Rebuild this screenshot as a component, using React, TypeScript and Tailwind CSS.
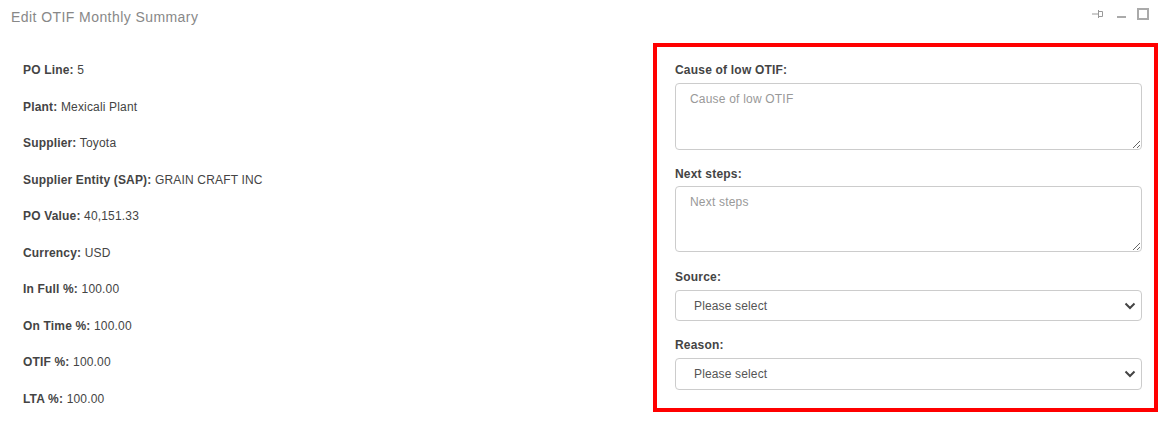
const details = [
  { label: "PO Line:", value: "5" },
  { label: "Plant:", value: "Mexicali Plant" },
  { label: "Supplier:", value: "Toyota" },
  { label: "Supplier Entity (SAP):", value: "GRAIN CRAFT INC" },
  { label: "PO Value:", value: "40,151.33" },
  { label: "Currency:", value: "USD" },
  { label: "In Full %:", value: "100.00" },
  { label: "On Time %:", value: "100.00" },
  { label: "OTIF %:", value: "100.00" },
  { label: "LTA %:", value: "100.00" },
];

function Field({ label, placeholder, height, className, gap }: { label: string; placeholder: string; height: string; className?: string; gap: string }) {
  return (
    <div className={className}>
      <label className="block h-[16px] text-[12px] leading-[16px] font-bold tracking-[0.2px] text-[#444]">{label}</label>
      <textarea
        placeholder={placeholder}
        className={`${gap} block w-full ${height} rounded-[4px] border border-[#ccc] px-[14px] py-[6px] text-[12px] leading-[18px] tracking-[0.2px] text-[#555] outline-none placeholder:text-[#999]`}
      />
    </div>
  );
}

function SelectField({ label, height, className }: { label: string; height: string; className?: string }) {
  return (
    <div className={className}>
      <label className="block h-[16px] text-[12px] leading-[16px] font-bold tracking-[0.2px] text-[#444]">{label}</label>
      <div className={`relative mt-[5px] flex ${height} w-full items-center rounded-[4px] border border-[#ccc] pl-[18px] text-[12px] tracking-[0.15px] text-[#555]`}>
        Please select
        <svg viewBox="0 0 12 8" className="absolute right-[5px] top-1/2 h-[8px] w-[12px] -translate-y-1/2" fill="none" stroke="#444" strokeWidth="2">
          <path d="M1.500 1.500 6 6l4.500-4.500" />
        </svg>
      </div>
    </div>
  );
}

export default function App() {
  return (
    <div className="h-[431px] w-[1160px] overflow-hidden bg-white font-['Liberation_Sans',Arial,sans-serif]">
      <div className="flex h-[43px] items-start justify-between pl-[11px] pr-[11px] pt-[8px]">
        <h1 className="text-[14px] leading-[18px] tracking-[0.43px] text-[#888]">Edit OTIF Monthly Summary</h1>
        <div className="flex items-center">
          <svg viewBox="0 0 12 8" className="h-[8px] w-[12px]" fill="none" stroke="#999" strokeWidth="1">
            <path d="M0 4h6M6.500 0v8M6.500 1.500h4v5h-4" />
          </svg>
          <span className="ml-[13px] mt-[6px] h-[2px] w-[9px] bg-[#aaa]" />
          <span className="ml-[11px] h-[12px] w-[12px] border-2 border-[#aaa]" />
        </div>
      </div>
      <div className="flex items-start">
        <div className="w-[653px] pl-[23px] pt-[19px]">
          {details.map((row) => (
            <p key={row.label} className="mb-[20.500px] h-[16px] text-[12px] leading-[16px] tracking-[0.17px] text-[#444]">
              <span className="font-bold">{row.label}</span> {row.value}
            </p>
          ))}
        </div>
        <div className="flex h-[369px] w-[505px] flex-col border-4 border-[#ff0000] pl-[18px] pr-[12px] pt-[15px]">
          <Field gap="mt-[5px]" label="Cause of low OTIF:" placeholder="Cause of low OTIF" height="h-[67px]" />
          <Field gap="mt-[4px]" className="mt-[16px]" label="Next steps:" placeholder="Next steps" height="h-[66px]" />
          <SelectField className="mt-[17px]" label="Source:" height="h-[31px]" />
          <SelectField className="mt-[16px]" label="Reason:" height="h-[32px]" />
        </div>
      </div>
    </div>
  );
}
